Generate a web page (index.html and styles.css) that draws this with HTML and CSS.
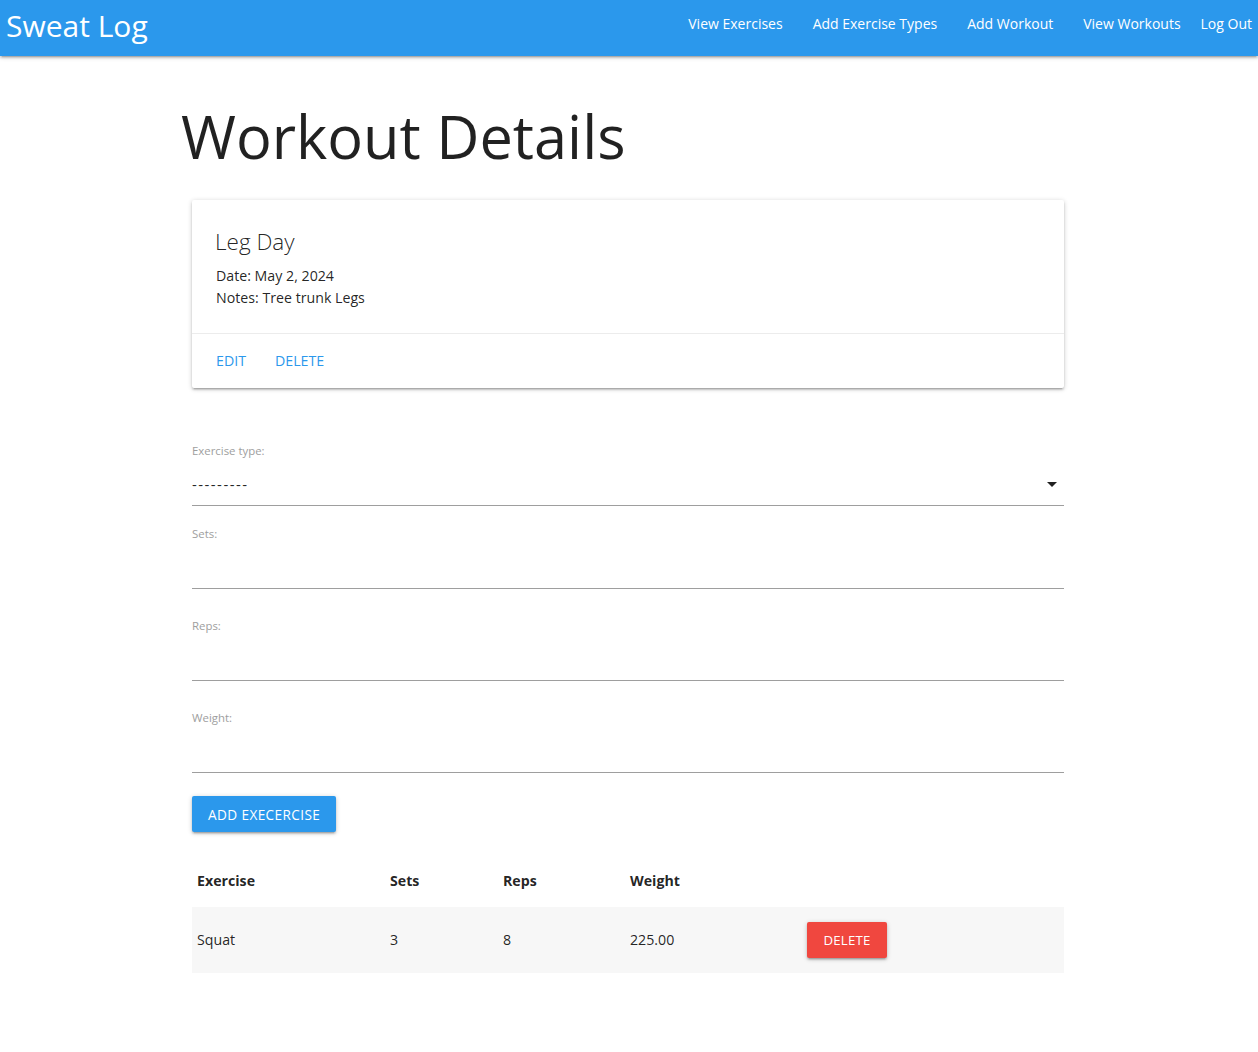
FILE: index.html
```html
<!DOCTYPE html>
<html lang="en">
<head>
<meta charset="utf-8">
<title>Sweat Log - Workout Details</title>
<link rel="stylesheet" href="styles.css">
</head>
<body>
<nav class="nav">
  <a class="brand" href="#">Sweat Log</a>
  <ul class="nav-links">
    <li><a href="#">View Exercises</a></li>
    <li><a href="#">Add Exercise Types</a></li>
    <li><a href="#">Add Workout</a></li>
    <li><a href="#">View Workouts</a></li>
    <li class="logout"><a href="#">Log Out</a></li>
  </ul>
</nav>
<main class="container">
  <h1 class="page-title">Workout Details</h1>
  <div class="card">
    <div class="card-content">
      <span class="card-title">Leg Day</span>
      <p>Date: May 2, 2024</p>
      <p>Notes: Tree trunk Legs</p>
    </div>
    <div class="card-action">
      <a href="#">Edit</a>
      <a href="#">Delete</a>
    </div>
  </div>
  <form class="exercise-form">
    <div class="field field-select">
      <label class="field-label">Exercise type:</label>
      <div class="select">
        <span class="select-value">---------</span>
        <svg class="caret" width="10" height="5" viewBox="0 0 10 5"><path d="M0 0h10L5 5z" fill="#212121"/></svg>
      </div>
    </div>
    <div class="field">
      <label class="field-label">Sets:</label>
      <div class="input"></div>
    </div>
    <div class="field">
      <label class="field-label">Reps:</label>
      <div class="input"></div>
    </div>
    <div class="field field-last">
      <label class="field-label">Weight:</label>
      <div class="input"></div>
    </div>
    <button type="button" class="btn btn-blue">Add Execercise</button>
  </form>
  <table class="exercise-table">
    <colgroup>
      <col class="c1"><col class="c2"><col class="c3"><col class="c4"><col class="c5">
    </colgroup>
    <thead>
      <tr><th>Exercise</th><th>Sets</th><th>Reps</th><th>Weight</th><th></th></tr>
    </thead>
    <tbody>
      <tr class="striped">
        <td>Squat</td><td>3</td><td>8</td><td>225.00</td>
        <td><button type="button" class="btn btn-red">Delete</button></td>
      </tr>
    </tbody>
  </table>
</main>
</body>
</html>
```
FILE: styles.css
```css
* { box-sizing: border-box; }
html, body { margin: 0; padding: 0; }
body {
  font-family: "Open Sans", "Noto Sans", sans-serif;
  color: rgba(0,0,0,0.87);
  background: #fff;
  font-size: 14px;
}
a { text-decoration: none; }

.nav {
  height: 56px;
  background: #2b98ec;
  display: flex;
  align-items: flex-start;
  justify-content: space-between;
  box-shadow: 0 2px 2px 0 rgba(0,0,0,.14), 0 3px 1px -2px rgba(0,0,0,.12), 0 1px 5px 0 rgba(0,0,0,.2);
  position: relative;
  z-index: 2;
}
.brand {
  color: #fff;
  font-size: 30px;
  line-height: 52px;
  padding-left: 6px;
}
.nav-links {
  list-style: none;
  margin: 0;
  padding: 0 6px 0 0;
  display: flex;
  align-items: flex-start;
}
.nav-links a {
  color: #fff;
  font-size: 14px;
  padding: 0 15px;
  line-height: 48px;
  display: block;
}
.nav-links .logout a { padding: 0 0 0 5px; }

.container {
  width: 874px;
  margin: 0 auto;
  padding-right: 2px;
}
.page-title {
  font-size: 59.5px;
  font-weight: 400;
  line-height: 69px;
  margin: 45px 0 30px -11px;
  color: rgba(0,0,0,0.87);
}
.card {
  background: #fff;
  box-shadow: 0 2px 2px 0 rgba(0,0,0,.14), 0 3px 1px -2px rgba(0,0,0,.12), 0 1px 5px 0 rgba(0,0,0,.2);
  border-radius: 2px;
}
.card-content { padding: 24px; }
.card-title {
  display: block;
  font-size: 22.5px;
  font-weight: 300;
  line-height: 32px;
  padding-top: 2px;
  margin-bottom: 7px;
  margin-left: -1px;
}
.card-content p {
  margin: 0;
  font-size: 14.2px;
  line-height: 22px;
}
.card-action {
  border-top: 1px solid rgba(160,160,160,0.2);
  padding: 16px 24px;
  display: flex;
  gap: 29px;
}
.card-action a {
  color: #2b98ec;
  text-transform: uppercase;
  font-size: 14.2px;
  line-height: 22px;
}

.exercise-form { margin-top: 54px; }
.field { margin-bottom: 28px; }
.field-select { margin-bottom: 19px; }
.field-last { margin-bottom: 23px; }
.field-label {
  display: block;
  font-size: 11.4px;
  line-height: 17px;
  color: #9e9e9e;
}
.input, .select {
  height: 47px;
  border-bottom: 1px solid #9e9e9e;
}
.select {
  display: flex;
  align-items: center;
  justify-content: space-between;
  padding-top: 3px;
  padding-right: 7px;
}
.select-value {
  font-size: 15px;
  letter-spacing: 1.45px;
  color: rgba(0,0,0,0.87);
}
.caret { margin-top: 1px; }

.btn {
  border: none;
  border-radius: 2px;
  height: 36px;
  padding: 0 16px;
  color: #fff;
  font-family: "Open Sans", "Noto Sans", sans-serif;
  font-size: 13.6px;
  letter-spacing: .4px;
  text-transform: uppercase;
  box-shadow: 0 2px 2px 0 rgba(0,0,0,.14), 0 3px 1px -2px rgba(0,0,0,.12), 0 1px 5px 0 rgba(0,0,0,.2);
  cursor: pointer;
}
.btn-blue { background: #2b98ec; }
.btn-red { background: #f0473f; width: 80px; padding: 0; font-size: 13.2px; letter-spacing: .2px; }

.exercise-table {
  margin-top: 23px;
  width: 872px;
  border-collapse: collapse;
  table-layout: fixed;
  font-size: 14.2px;
}
.c1 { width: 193px; }
.c2 { width: 113px; }
.c3 { width: 127px; }
.c4 { width: 177px; }
.exercise-table th {
  text-align: left;
  font-weight: 700;
  padding: 15px 5px;
  line-height: 22px;
}
.exercise-table td {
  padding: 15px 5px;
  line-height: 22px;
  vertical-align: middle;
}
.exercise-table tr.striped { background: #f7f7f7; }
.exercise-table td .btn { display: block; }
```
